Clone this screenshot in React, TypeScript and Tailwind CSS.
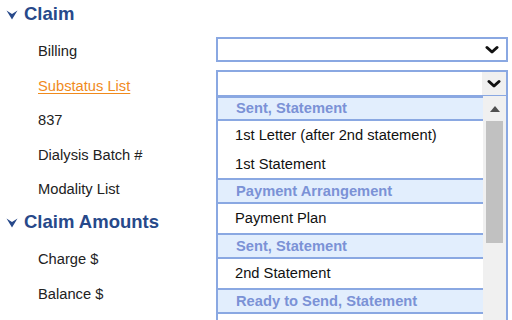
const font = { fontFamily: '"Liberation Sans", Arial, sans-serif' };

function SectionChevron() {
    return (
        <svg width="12" height="11" viewBox="0 0 12 11" className="shrink-0">
            <path d="M0.5 1.5 L6 5 L11.5 1.5 L6 10.5 Z" fill="#27498a" />
        </svg>
    );
}

function SelectChevron() {
    return (
        <svg width="14" height="10" viewBox="0 0 14 10">
            <polyline points="2,2.5 7,7 12,2.5" fill="none" stroke="#111" strokeWidth="3" strokeLinecap="round" strokeLinejoin="round" />
        </svg>
    );
}

function SectionTitle({ title }: { title: string }) {
    return (
        <div className="flex h-[28px] items-center gap-[6px] pl-[6px]">
            <SectionChevron />
            <span className="text-[18.5px] font-bold text-[#27498a]">{title}</span>
        </div>
    );
}

function Label({ children, active }: { children: string; active?: boolean }) {
    return (
        <span
            className={
                active
                    ? 'text-[14.7px] text-[#f08a1c] underline decoration-1 underline-offset-[2px]'
                    : 'text-[14.7px] text-[#222]'
            }
        >
            {children}
        </span>
    );
}

type Item = { kind: 'group' | 'option'; text: string; h: string };

const items: Item[] = [
    { kind: 'group', text: 'Sent, Statement', h: 'h-[25px]' },
    { kind: 'option', text: '1st Letter (after 2nd statement)', h: 'h-[29px]' },
    { kind: 'option', text: '1st Statement', h: 'h-[28px]' },
    { kind: 'group', text: 'Payment Arrangement', h: 'h-[26px]' },
    { kind: 'option', text: 'Payment Plan', h: 'h-[29px]' },
    { kind: 'group', text: 'Sent, Statement', h: 'h-[26px]' },
    { kind: 'option', text: '2nd Statement', h: 'h-[29px]' },
    { kind: 'group', text: 'Ready to Send, Statement', h: 'h-[26px]' },
    { kind: 'option', text: '', h: 'h-[29px]' },
];

function Dropdown() {
    return (
        <div className="absolute left-[216px] top-[96px] flex h-[240px] w-[292px] border-x-2 border-[#8aa8e2] bg-white">
            <div className="flex flex-1 flex-col overflow-hidden">
                {items.map((it, i) =>
                    it.kind === 'group' ? (
                        <div
                            key={i}
                            className={`${it.h} flex shrink-0 items-center border-y-2 border-[#8aa8e2] bg-[#e2eefd] pl-[18px] text-[14.7px] font-bold text-[#7b92d6]`}
                        >
                            {it.text}
                        </div>
                    ) : (
                        <div key={i} className={`${it.h} flex shrink-0 items-center pl-[17px] text-[14.7px] text-[#111]`}>
                            {it.text}
                        </div>
                    ),
                )}
            </div>
            <div className="flex w-[23px] flex-col items-center bg-[#f0f0f0]">
                <div className="flex h-[25px] items-center justify-center">
                    <svg width="10" height="6" viewBox="0 0 10 6">
                        <path d="M0 6 L5 0 L10 6 Z" fill="#505050" />
                    </svg>
                </div>
                <div className="h-[122px] w-[17px] bg-[#c1c1c1]" />
            </div>
        </div>
    );
}

export default function App() {
    return (
        <div className="relative h-[320px] w-[512px] overflow-hidden bg-white" style={font}>
            <SectionTitle title="Claim" />
            <div className="mt-[6px] grid grid-cols-[216px_292px]">
                <div className="flex h-[34.5px] items-center pl-[38px]">
                    <Label>Billing</Label>
                </div>
                <div className="h-[34.5px] pt-[3px]">
                    <div className="flex h-[25px] items-center justify-end border-2 border-[#8aa8e2] pr-[7px]">
                        <SelectChevron />
                    </div>
                </div>

                <div className="flex h-[34.5px] items-center pl-[38px]">
                    <Label active>Substatus List</Label>
                </div>
                <div className="h-[34.5px] pt-[1.5px]">
                    <div className="flex h-[27px] items-stretch justify-end border-2 border-[#8aa8e2]">
                        <div className="flex w-[24px] items-center justify-center bg-[#f0f0f0]">
                            <SelectChevron />
                        </div>
                    </div>
                </div>

                <div className="col-span-2 flex h-[34.5px] items-center pl-[38px]">
                    <Label>837</Label>
                </div>
                <div className="col-span-2 flex h-[34.5px] items-center pl-[38px]">
                    <Label>Dialysis Batch #</Label>
                </div>
                <div className="col-span-2 flex h-[34.5px] items-center pl-[38px]">
                    <Label>Modality List</Label>
                </div>
            </div>
            <div className="mt-[1.5px]">
                <SectionTitle title="Claim Amounts" />
            </div>
            <div className="mt-[6px] flex flex-col">
                <div className="flex h-[34.5px] items-center pl-[38px]">
                    <Label>Charge $</Label>
                </div>
                <div className="flex h-[34.5px] items-center pl-[38px]">
                    <Label>Balance $</Label>
                </div>
            </div>
            <Dropdown />
        </div>
    );
}
